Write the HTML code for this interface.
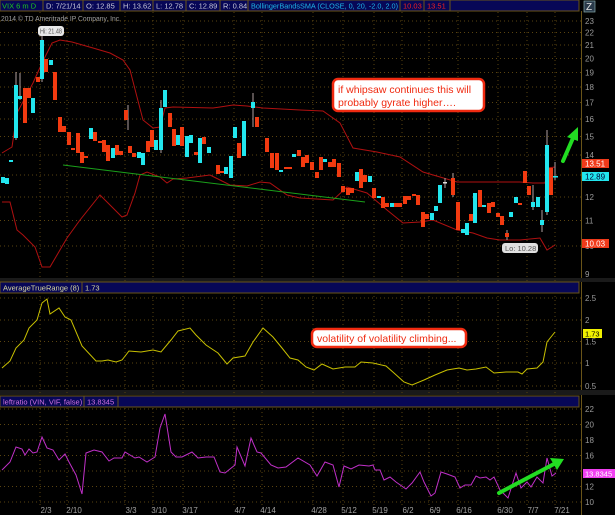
<!DOCTYPE html>
<html><head><meta charset="utf-8"><style>
html,body{margin:0;padding:0;background:#000;}
svg{display:block;font-family:"Liberation Sans",sans-serif;}
.g{stroke:#5a4410;stroke-width:1;stroke-dasharray:1 3;}
.ax{fill:#9a9a9a;font-size:8px;}
.c{fill:#22e6ee;}
.r{fill:#f23a10;}
.w{stroke:#b0a0a0;stroke-width:1;}
</style></head><body>
<svg width="615" height="515" viewBox="0 0 615 515" xmlns="http://www.w3.org/2000/svg">
<rect width="615" height="515" fill="#000"/>
<rect x="0" y="0" width="579" height="11" fill="#070757" stroke="#6a5418" stroke-width="1"/>
<g font-size="7.5" fill="#c8c8d8">
<text x="2" y="8.5" fill="#1ec81e">VIX 6 m D</text>
<text x="46" y="8.5">D: 7/21/14</text>
<text x="86" y="8.5">O: 12.85</text>
<text x="123" y="8.5">H: 13.62</text>
<text x="156" y="8.5">L: 12.78</text>
<text x="189" y="8.5">C: 12.89</text>
<text x="223" y="8.5">R: 0.84</text>
<text x="251" y="8.5" fill="#1eb4e6" textLength="147" lengthAdjust="spacingAndGlyphs">BollingerBandsSMA (CLOSE, 0, 20, -2.0, 2.0)</text>
<text x="403" y="8.5" fill="#f02020">10.03</text>
<text x="427" y="8.5" fill="#f02020">13.51</text>
</g>
<g stroke="#6a5418"><line x1="43" y1="0" x2="43" y2="11"/><line x1="83" y1="0" x2="83" y2="11"/><line x1="120" y1="0" x2="120" y2="11"/><line x1="153" y1="0" x2="153" y2="11"/><line x1="186" y1="0" x2="186" y2="11"/><line x1="220" y1="0" x2="220" y2="11"/><line x1="248" y1="0" x2="248" y2="11"/><line x1="400" y1="0" x2="400" y2="11"/><line x1="424" y1="0" x2="424" y2="11"/><line x1="450" y1="0" x2="450" y2="11"/></g>
<rect x="584" y="1" width="11" height="11" fill="#2a3a4a" stroke="#8aa" stroke-width="0.7"/>
<text x="586" y="10" font-size="10" fill="#e0e0e0">Z</text>
<text x="1" y="21" font-size="7" fill="#a0a0a0" textLength="120" lengthAdjust="spacingAndGlyphs">2014 © TD Ameritrade IP Company, Inc.</text>

<line x1="581.5" y1="11" x2="581.5" y2="515" stroke="#6a5418"/>
<rect x="0" y="278" width="615" height="4" fill="#1a1a1a"/>
<rect x="0" y="390" width="615" height="5" fill="#1a1a1a"/>

<g class="g">
<line x1="40" y1="12" x2="40" y2="505"/><line x1="67" y1="12" x2="67" y2="505"/><line x1="125" y1="12" x2="125" y2="505"/><line x1="153" y1="12" x2="153" y2="505"/><line x1="183" y1="12" x2="183" y2="505"/><line x1="234" y1="12" x2="234" y2="505"/><line x1="262" y1="12" x2="262" y2="505"/><line x1="313" y1="12" x2="313" y2="505"/><line x1="343" y1="12" x2="343" y2="505"/><line x1="374" y1="12" x2="374" y2="505"/><line x1="402" y1="12" x2="402" y2="505"/><line x1="429" y1="12" x2="429" y2="505"/><line x1="458" y1="12" x2="458" y2="505"/><line x1="498" y1="12" x2="498" y2="505"/><line x1="527" y1="12" x2="527" y2="505"/><line x1="555" y1="12" x2="555" y2="505"/>
</g>
<g class="g">
<line x1="0" y1="246" x2="581" y2="246"/><line x1="0" y1="220.5" x2="581" y2="220.5"/><line x1="0" y1="197" x2="581" y2="197"/><line x1="0" y1="175" x2="581" y2="175"/><line x1="0" y1="155" x2="581" y2="155"/><line x1="0" y1="136.5" x2="581" y2="136.5"/><line x1="0" y1="119" x2="581" y2="119"/><line x1="0" y1="102.5" x2="581" y2="102.5"/><line x1="0" y1="87" x2="581" y2="87"/><line x1="0" y1="72.5" x2="581" y2="72.5"/><line x1="0" y1="58.5" x2="581" y2="58.5"/><line x1="0" y1="45" x2="581" y2="45"/><line x1="0" y1="32.5" x2="581" y2="32.5"/><line x1="0" y1="21" x2="581" y2="21"/>
</g>
<g class="ax">
<text x="585" y="277">9</text><text x="585" y="249">10</text><text x="585" y="223.5">11</text><text x="585" y="200">12</text><text x="585" y="158">14</text><text x="585" y="139.5">15</text><text x="585" y="122">16</text><text x="585" y="105.5">17</text><text x="585" y="90">18</text><text x="585" y="75.5">19</text><text x="585" y="61.5">20</text><text x="585" y="48">21</text><text x="585" y="35.5">22</text><text x="585" y="24">23</text>
</g>

<polyline fill="none" stroke="#b01010" stroke-width="1" points="2,153 12,147 17,113 33,83 42,63 52,43 60,40 72,42 93,48 110,53 123,60 130,70 137,97 143,120 153,128 160,127 165,108 173,107 213,108 220,107 233,105 247,106 263,108 300,110 323,111 340,123 353,148 377,152 400,157 423,172 440,177 457,182 477,182 520,182 533,183 545,183 548,168 555,167"/>
<polyline fill="none" stroke="#b01010" stroke-width="1" points="2,202 10,202 17,230 23,235 35,247 42,267 50,267 67,238 80,220 100,195 110,205 122,217 127,215 135,193 140,175 147,172 160,177 167,183 173,179 187,178 210,175 220,180 230,185 247,186 260,182 270,183 287,195 300,198 333,200 347,187 367,193 387,210 403,223 420,222 433,220 457,230 473,233 487,238 500,240 520,240 540,238 547,250 555,245"/>
<line x1="63" y1="165" x2="365" y2="202" stroke="#1aa01a" stroke-width="1"/>

<g class="w" stroke="#c0c0c0">
<line x1="16" y1="72" x2="16" y2="140"/><line x1="42" y1="35" x2="42" y2="82"/><line x1="20" y1="73" x2="20" y2="100"/><line x1="161" y1="100" x2="161" y2="153"/><line x1="547" y1="130" x2="547" y2="215"/><line x1="555" y1="162" x2="555" y2="180"/><line x1="253" y1="93" x2="253" y2="127"/><line x1="128" y1="105" x2="128" y2="130"/><line x1="453" y1="173" x2="453" y2="197"/><line x1="445" y1="178" x2="445" y2="188"/><line x1="507" y1="230" x2="507" y2="240"/><line x1="533" y1="185" x2="533" y2="210"/><line x1="542" y1="210" x2="542" y2="232"/>
</g>
<g>
<rect class="c" x="1" y="177" width="4" height="6"/><rect class="c" x="5" y="178" width="4" height="6"/><rect class="c" x="9" y="160" width="4" height="2"/><rect class="c" x="14" y="85" width="4" height="53"/><rect class="c" x="18" y="96" width="4" height="3"/><rect class="r" x="23" y="88" width="4" height="35"/><rect class="r" x="27" y="88" width="4" height="10"/><rect class="c" x="31" y="98" width="4" height="15"/><rect class="r" x="36" y="77" width="4" height="5"/><rect class="c" x="40" y="40" width="4" height="39"/><rect class="r" x="44" y="59" width="4" height="13"/><rect class="c" x="49" y="60" width="4" height="5"/><rect class="r" x="53" y="72" width="4" height="28"/><rect class="r" x="58" y="117" width="4" height="15"/><rect class="r" x="62" y="126" width="4" height="6"/><rect class="r" x="67" y="132" width="4" height="13"/><rect class="r" x="71" y="148" width="4" height="2"/><rect class="r" x="76" y="133" width="4" height="20"/><rect class="r" x="80" y="152" width="4" height="11"/><rect class="r" x="84" y="156" width="4" height="2"/><rect class="c" x="89" y="128" width="4" height="11"/><rect class="r" x="93" y="132" width="4" height="9"/><rect class="r" x="98" y="141" width="4" height="2"/><rect class="r" x="102" y="140" width="4" height="12"/><rect class="r" x="106" y="145" width="4" height="16"/><rect class="c" x="111" y="148" width="4" height="10"/><rect class="r" x="115" y="145" width="4" height="10"/><rect class="r" x="119" y="151" width="4" height="4"/><rect class="r" x="124" y="110" width="4" height="10"/><rect class="r" x="128" y="146" width="4" height="7"/><rect class="r" x="132" y="153" width="4" height="4"/><rect class="c" x="137" y="152" width="4" height="6"/><rect class="c" x="141" y="153" width="4" height="12"/><rect class="r" x="146" y="141" width="4" height="11"/><rect class="r" x="150" y="130" width="4" height="17"/><rect class="c" x="154" y="140" width="4" height="10"/><rect class="c" x="159" y="108" width="4" height="42"/><rect class="c" x="163" y="90" width="4" height="17"/><rect class="r" x="168" y="113" width="4" height="14"/><rect class="r" x="172" y="129" width="4" height="17"/><rect class="c" x="176" y="135" width="4" height="10"/><rect class="r" x="180" y="127" width="4" height="19"/><rect class="c" x="185" y="136" width="4" height="21"/><rect class="c" x="189" y="135" width="4" height="8"/><rect class="r" x="194" y="152" width="4" height="3"/><rect class="c" x="198" y="138" width="4" height="25"/><rect class="r" x="202" y="137" width="4" height="7"/><rect class="c" x="207" y="147" width="4" height="6"/><rect class="r" x="216" y="165" width="4" height="9"/><rect class="r" x="220" y="171" width="4" height="2"/><rect class="c" x="224" y="167" width="4" height="7"/><rect class="c" x="229" y="156" width="4" height="22"/><rect class="c" x="233" y="127" width="4" height="11"/><rect class="r" x="237" y="143" width="4" height="15"/><rect class="c" x="242" y="121" width="4" height="35"/><rect class="c" x="251" y="102" width="4" height="6"/><rect class="r" x="255" y="117" width="4" height="10"/><rect class="r" x="265" y="138" width="4" height="14"/><rect class="r" x="270" y="153" width="4" height="15"/><rect class="r" x="275" y="153" width="4" height="17"/><rect class="c" x="279" y="170" width="4" height="2"/><rect class="r" x="284" y="167" width="4" height="2"/><rect class="r" x="288" y="167" width="4" height="2"/><rect class="c" x="292" y="154" width="4" height="3"/><rect class="r" x="297" y="150" width="4" height="6"/><rect class="r" x="301" y="157" width="4" height="10"/><rect class="r" x="305" y="155" width="4" height="8"/><rect class="r" x="310" y="162" width="4" height="8"/><rect class="r" x="315" y="172" width="4" height="6"/><rect class="r" x="319" y="157" width="4" height="13"/><rect class="c" x="323" y="159" width="4" height="3"/><rect class="r" x="328" y="162" width="4" height="5"/><rect class="r" x="332" y="159" width="4" height="8"/><rect class="r" x="337" y="163" width="4" height="14"/><rect class="r" x="341" y="186" width="4" height="6"/><rect class="r" x="346" y="188" width="4" height="7"/><rect class="r" x="350" y="188" width="4" height="5"/><rect class="c" x="355" y="172" width="4" height="9"/><rect class="r" x="359" y="169" width="4" height="19"/><rect class="r" x="363" y="175" width="4" height="7"/><rect class="c" x="368" y="176" width="4" height="6"/><rect class="r" x="372" y="188" width="4" height="10"/><rect class="c" x="377" y="196" width="4" height="2"/><rect class="r" x="381" y="197" width="4" height="11"/><rect class="r" x="385" y="203" width="4" height="4"/><rect class="c" x="390" y="203" width="4" height="4"/><rect class="r" x="394" y="203" width="4" height="4"/><rect class="r" x="398" y="203" width="4" height="4"/><rect class="r" x="403" y="196" width="4" height="8"/><rect class="r" x="407" y="196" width="4" height="4"/><rect class="r" x="412" y="194" width="4" height="2"/><rect class="r" x="416" y="195" width="4" height="10"/><rect class="r" x="421" y="212" width="4" height="15"/><rect class="r" x="425" y="214" width="4" height="5"/><rect class="c" x="430" y="213" width="4" height="7"/><rect class="c" x="434" y="206" width="4" height="5"/><rect class="c" x="438" y="185" width="4" height="18"/><rect x="443" y="182" width="4" height="1.5" fill="#ddd"/><rect class="r" x="451" y="178" width="4" height="17"/><rect class="r" x="456" y="202" width="4" height="28"/><rect class="c" x="461" y="229" width="4" height="4"/><rect class="c" x="465" y="223" width="4" height="12"/><rect class="r" x="469" y="214" width="4" height="7"/><rect class="c" x="473" y="193" width="4" height="30"/><rect class="r" x="478" y="190" width="4" height="17"/><rect class="c" x="482" y="205" width="4" height="2"/><rect class="r" x="487" y="203" width="4" height="10"/><rect class="r" x="491" y="202" width="4" height="5"/><rect class="r" x="496" y="213" width="4" height="4"/><rect class="r" x="500" y="216" width="4" height="9"/><rect class="r" x="505" y="233" width="4" height="4"/><rect class="c" x="509" y="212" width="4" height="5"/><rect class="c" x="514" y="197" width="4" height="6"/><rect class="r" x="518" y="203" width="4" height="2"/><rect class="r" x="523" y="171" width="4" height="12"/><rect class="r" x="527" y="186" width="4" height="9"/><rect class="c" x="531" y="202" width="4" height="5"/><rect class="c" x="536" y="197" width="4" height="10"/><rect class="c" x="540" y="220" width="4" height="5"/><rect class="c" x="545" y="145" width="4" height="67"/><rect class="r" x="549" y="168" width="4" height="27"/><rect x="553" y="176" width="5" height="1.5" fill="#22e6ee"/>
</g>
<rect x="38" y="26" width="26" height="10" rx="3" fill="#e8e8e8"/>
<text x="40" y="33.5" font-size="7" fill="#555" textLength="22" lengthAdjust="spacingAndGlyphs">Hi: 21.48</text>
<rect x="502" y="243" width="36" height="10" rx="3" fill="#e0e0e0"/>
<text x="505" y="251" font-size="7.5" fill="#555">Lo: 10.28</text>
<rect x="582" y="159" width="27" height="9" fill="#f03a1a"/><text x="585" y="166.5" font-size="8" fill="#fff">13.51</text>
<rect x="582" y="172" width="27" height="9" fill="#22e6ee"/><text x="585" y="179.5" font-size="8" fill="#003">12.89</text>
<rect x="582" y="239" width="27" height="9" fill="#f03a1a"/><text x="585" y="246.5" font-size="8" fill="#fff">10.03</text>
<rect x="333" y="79" width="151" height="32" rx="5" fill="#fff" stroke="#f02a10" stroke-width="2.5"/>
<text x="338" y="93" font-size="10.5" fill="#f02a10">if whipsaw continues this will</text>
<text x="338" y="106" font-size="10.5" fill="#f02a10">probably gyrate higher….</text>
<line x1="563" y1="161" x2="573" y2="138" stroke="#22dd22" stroke-width="4" stroke-linecap="round"/>
<polygon points="578,127 567,137 578,141" fill="#22dd22"/>

<rect x="0" y="282" width="579" height="11" fill="#070757" stroke="#6a5418"/>
<line x1="82" y1="282" x2="82" y2="293" stroke="#6a5418"/>
<text x="3" y="290.5" font-size="7.5" fill="#d8d8a0">AverageTrueRange (8)</text>
<text x="85" y="290.5" font-size="7.5" fill="#d8d8a0">1.73</text>
<g class="g"><line x1="0" y1="298" x2="581" y2="298"/><line x1="0" y1="320" x2="581" y2="320"/><line x1="0" y1="341.5" x2="581" y2="341.5"/><line x1="0" y1="363" x2="581" y2="363"/><line x1="0" y1="386" x2="581" y2="386"/></g>
<g class="ax"><text x="585" y="301">2.5</text><text x="585" y="323">2</text><text x="585" y="344.5">1.5</text><text x="585" y="366">1</text><text x="585" y="389">0.5</text></g>
<polyline fill="none" stroke="#c8c000" stroke-width="1" points="2,368 10,361 16,348 24,340 29,328 37,320 42,303 47,299 50,314 59,308 65,317 71,320 82,346 96,361 102,361 108,360 116,362 122,360 129,351 141,352 153,350 161,352 171,340 178,331 190,328 196,335 206,345 218,353 227,364 233,358 245,356 253,342 263,328 273,337 282,348 290,358 298,360 306,367 314,370 322,364 333,369 345,367 355,367 361,362 373,363 386,366 394,373 404,382 412,385 424,380 435,375 447,370 459,368 467,370 476,369 486,367 494,373 506,372 518,372 522,374 527,369 537,368 543,362 547,342 555,332"/>
<rect x="583" y="329" width="19" height="9" fill="#f0f000"/><text x="585" y="336.5" font-size="7.5" fill="#000">1.73</text>
<rect x="312" y="329" width="154" height="18" rx="5" fill="#fff" stroke="#f02a10" stroke-width="2.5"/>
<text x="317" y="342" font-size="10.5" fill="#f02a10">volatility of volatility climbing...</text>

<rect x="0" y="396" width="579" height="11" fill="#070757" stroke="#6a5418"/>
<line x1="84" y1="396" x2="84" y2="407" stroke="#6a5418"/><line x1="118" y1="396" x2="118" y2="407" stroke="#6a5418"/>
<text x="3" y="404.5" font-size="7.5" fill="#d070e0">leftratio (VIN, VIF, false)</text>
<text x="87" y="404.5" font-size="7.5" fill="#d070e0">13.8345</text>
<g class="g"><line x1="0" y1="409" x2="581" y2="409"/><line x1="0" y1="424.5" x2="581" y2="424.5"/><line x1="0" y1="440" x2="581" y2="440"/><line x1="0" y1="455.5" x2="581" y2="455.5"/><line x1="0" y1="471" x2="581" y2="471"/><line x1="0" y1="486.5" x2="581" y2="486.5"/><line x1="0" y1="502" x2="581" y2="502"/></g>
<g class="ax"><text x="585" y="412">22</text><text x="585" y="427.5">20</text><text x="585" y="443">18</text><text x="585" y="458.5">16</text><text x="585" y="489.5">12</text><text x="585" y="505">10</text></g>
<polyline fill="none" stroke="#c030c8" stroke-width="1" points="2,470 10,462 16,447 22,449 25,455 29,449 33,453 37,452 42,437 47,448 53,450 59,460 65,454 69,462 76,475 82,494 86,453 94,450 102,452 109,461 114,458 122,458 125,452 135,458 139,457 147,462 155,457 160,428 165,414 171,452 176,457 182,457 192,452 198,458 206,457 214,457 220,472 225,473 235,465 237,447 245,466 251,438 257,452 261,453 271,465 278,468 286,467 298,458 310,465 317,476 325,462 333,465 339,487 344,466 351,469 359,465 369,466 373,465 375,470 380,470 384,480 390,477 396,482 406,489 412,483 420,472 424,482 431,496 435,493 441,472 447,474 455,477 460,488 465,485 471,485 476,476 480,478 486,477 490,480 494,477 500,490 508,498 516,473 521,488 527,482 531,487 537,477 543,483 547,458 552,476 556,473"/>
<rect x="583" y="469" width="32" height="9" fill="#f040f0"/><text x="585" y="476.5" font-size="7.5" fill="#fff">13.8345</text>
<line x1="499" y1="493" x2="554" y2="464" stroke="#22dd22" stroke-width="4" stroke-linecap="round"/>
<polygon points="564,459 550,458 557,470" fill="#22dd22"/>
<g font-size="8" fill="#a0a0a0" text-anchor="middle">
<text x="46" y="513">2/3</text><text x="74" y="513">2/10</text><text x="131" y="513">3/3</text><text x="159" y="513">3/10</text><text x="190" y="513">3/17</text><text x="240" y="513">4/7</text><text x="268" y="513">4/14</text><text x="319" y="513">4/28</text><text x="349" y="513">5/12</text><text x="380" y="513">5/19</text><text x="408" y="513">6/2</text><text x="435" y="513">6/9</text><text x="464" y="513">6/16</text><text x="505" y="513">6/30</text><text x="533" y="513">7/7</text><text x="562" y="513">7/21</text>
</g>
</svg>
</body></html>
